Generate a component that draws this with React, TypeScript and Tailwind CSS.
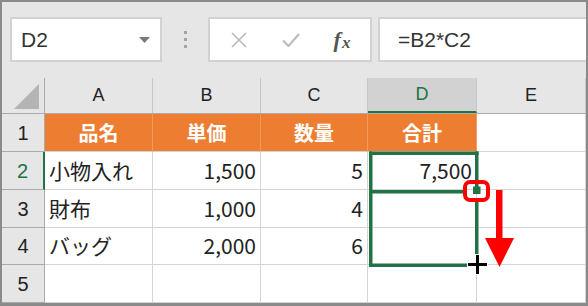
const widths = ["w-[43px]", "w-[108px]", "w-[108px]", "w-[107px]", "w-[109px]", "flex-1"];
const heights = ["h-[38px]", "h-[38px]", "h-[38px]", "h-[37px]", "h-[38px]"];

type Cell = { text: string; align?: "left" | "right" | "center" };

const rows: Cell[][] = [
  [{ text: "品名" }, { text: "単価" }, { text: "数量" }, { text: "合計" }, { text: "" }],
  [{ text: "小物入れ", align: "left" }, { text: "1,500", align: "right" }, { text: "5", align: "right" }, { text: "7,500", align: "right" }, { text: "" }],
  [{ text: "財布", align: "left" }, { text: "1,000", align: "right" }, { text: "4", align: "right" }, { text: "" }, { text: "" }],
  [{ text: "バッグ", align: "left" }, { text: "2,000", align: "right" }, { text: "6", align: "right" }, { text: "" }, { text: "" }],
  [{ text: "" }, { text: "" }, { text: "" }, { text: "" }, { text: "" }],
];

function FormulaBar() {
  return (
    <div className="h-[76px] flex items-start pt-[15px] bg-[#e6e6e6]">
      {/* name box */}
      <div className="ml-[8px] w-[152px] h-[45px] bg-white border-2 border-[#d2d2d2] flex items-center pl-[9px] pr-[10px]">
        <span className="flex-1 text-[21px] text-[#333] font-['Liberation_Sans',sans-serif]">D2</span>
        <svg width="11" height="6" viewBox="0 0 11 6">
          <path d="M0 0 L11 0 L5.5 6 Z" fill="#7a7a7a" />
        </svg>
      </div>
      <div className="w-[46px] h-[45px] flex flex-col items-center justify-center gap-[4px]">
        <span className="w-[3px] h-[3px] bg-[#a3a3a3]" />
        <span className="w-[3px] h-[3px] bg-[#a3a3a3]" />
        <span className="w-[3px] h-[3px] bg-[#a3a3a3]" />
      </div>
      {/* cancel / enter / fx */}
      <div className="w-[164px] h-[45px] bg-white border-2 border-[#d2d2d2] flex items-center">
        <div className="w-[54px] flex justify-center pl-[4px]">
          <svg width="16" height="16" viewBox="0 0 16 16">
            <path d="M1 1 L15 15 M15 1 L1 15" stroke="#b9b9b9" strokeWidth="1.6" />
          </svg>
        </div>
        <div className="w-[54px] flex justify-center">
          <svg width="18" height="14" viewBox="0 0 18 14">
            <path d="M1 7.5 L6.5 13 L17 1" stroke="#bdbdbd" strokeWidth="2.2" fill="none" />
          </svg>
        </div>
        <div className="flex-1 flex justify-center items-end pr-[4px] font-['Liberation_Serif',serif] italic font-bold text-[#555] leading-none">
          <span className="text-[22px]">f</span>
          <span className="text-[17px] ml-[1px]">x</span>
        </div>
      </div>
      <div className="ml-[6px] flex-1 h-[45px] bg-white border-2 border-r-0 border-[#d2d2d2] flex items-center pl-[18px]">
        <span className="text-[21px] text-[#333] font-['Liberation_Sans',sans-serif]">=B2*C2</span>
      </div>
    </div>
  );
}

function ColumnHeader() {
  const letters = ["A", "B", "C", "D", "E"];
  return (
    <div className="h-[36px] flex bg-[#e6e6e6] border-b border-[#ababab]">
      <div className={`${widths[0]} shrink-0 border-r border-[#ababab] flex items-end justify-end pr-[4px] pb-[3px]`}>
        <svg width="26" height="26" viewBox="0 0 26 26">
          <path d="M25 0 L25 25 L0 25 Z" fill="#b4b4b4" />
        </svg>
      </div>
      {letters.map((l, i) => (
        <div
          key={l}
          className={`${widths[i + 1]} shrink-0 flex items-center justify-center text-[18px] font-['Liberation_Sans',sans-serif] ${
            l === "D" ? "bg-[#d2d2d2] text-[#217346] border-b-2 border-[#217346] border-r border-r-[#c6c6c6]" : "text-[#222] border-r border-[#c6c6c6]"
          }`}
        >
          {l}
        </div>
      ))}
    </div>
  );
}

export default function App() {
  return (
    <div className="relative w-[588px] h-[306px] bg-white">
      <div className="w-[588px] h-[306px] border-2 border-b-[3px] border-[#8a8a8a] flex flex-col bg-[#e6e6e6]">
        <FormulaBar />
        <ColumnHeader />
        {rows.map((row, r) => (
          <div key={r} className={`${heights[r]} flex`}>
            <div
              className={`${widths[0]} shrink-0 bg-[#e6e6e6] border-b border-[#ababab] flex items-center justify-center text-[20px] font-['Liberation_Sans',sans-serif] ${
                r === 1 ? "text-[#217346] border-r-2 border-r-[#217346]" : "text-[#222] border-r border-r-[#ababab]"
              }`}
            >
              {r + 1}
            </div>
            {row.map((c, i) => {
              const orange = r === 0 && i < 4;
              return (
                <div
                  key={i}
                  className={`${widths[i + 1]} shrink-0 flex items-center px-[4px] font-['Noto_Sans_CJK_JP',sans-serif] border-b ${
                    orange
                      ? "bg-[#ed7d31] text-white font-bold text-[20px] justify-center border-r border-r-[#f19a5c] border-b-[#d4d4d4]"
                      : "bg-white text-[#222] text-[21px] border-r border-[#d4d4d4]"
                  } ${c.align === "right" ? "justify-end" : c.align === "left" ? "justify-start" : "justify-center"}`}
                >
                  {c.text}
                </div>
              );
            })}
          </div>
        ))}
      </div>

      {/* selection, fill handle and drag markup */}
      <svg className="absolute left-0 top-0 pointer-events-none" width="588" height="306" viewBox="0 0 588 306">
        <g fill="#217346">
          <rect x="369" y="151.5" width="3.5" height="115.5" />
          <rect x="369" y="151.5" width="109.5" height="3.5" />
          <rect x="475" y="151.5" width="3.5" height="40" />
          <rect x="369" y="190" width="96" height="3.5" />
          <rect x="475" y="200" width="3.5" height="54" />
          <rect x="369" y="263.5" width="98" height="3.5" />
          <rect x="473" y="186.5" width="7.5" height="7.5" />
        </g>
        <rect x="465" y="182" width="23" height="18" rx="5" fill="none" stroke="#ff0000" strokeWidth="4" />
        <rect x="496" y="190" width="6.5" height="50" fill="#ff0000" />
        <path d="M485 238 L514 238 L499.5 267 Z" fill="#ff0000" />
        <g>
          <rect x="467" y="262" width="21" height="5" fill="#fff" />
          <rect x="475" y="254" width="5" height="21" fill="#fff" />
          <rect x="468" y="263" width="19" height="3" fill="#000" />
          <rect x="476" y="255" width="3" height="19" fill="#000" />
        </g>
      </svg>
    </div>
  );
}
